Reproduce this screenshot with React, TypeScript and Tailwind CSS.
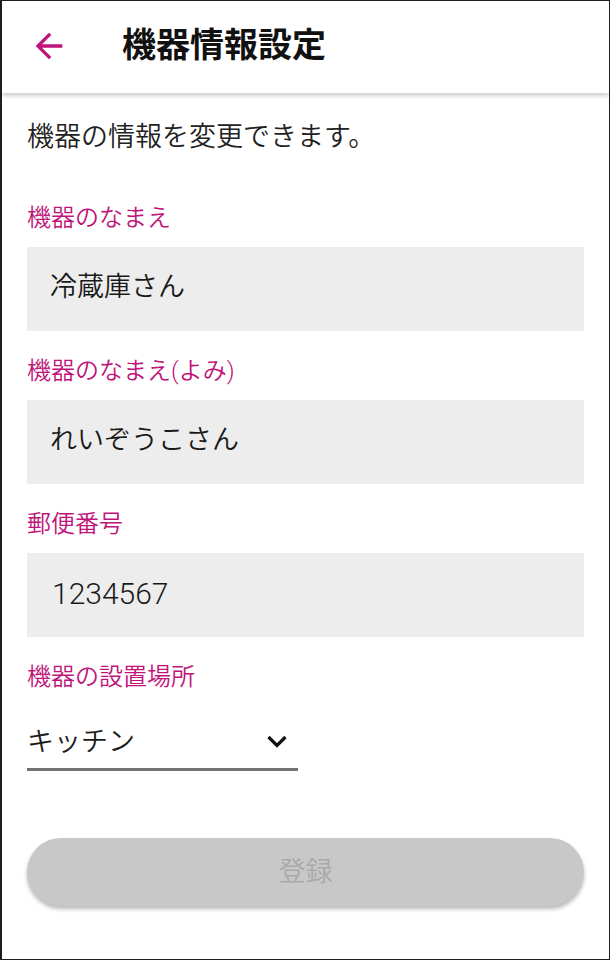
import { useState } from 'react';

const fields = [
  { label: "機器のなまえ", value: "冷蔵庫さん" },
  { label: "機器のなまえ(よみ)", value: "れいぞうこさん" },
  { label: "郵便番号", value: "1234567" },
];

export default function App() {
  const [place] = useState("キッチン");

  return (
    <div className="w-[610px] h-[960px] bg-white border border-l-2 border-[#1e1e1e] flex flex-col overflow-hidden font-['Roboto','Noto_Sans_CJK_JP',sans-serif] font-[350]">
      {/* Header */}
      <header className="h-[92px] shrink-0 flex items-center bg-white shadow-[0_3px_4px_rgba(0,0,0,0.18)] relative z-10">
        <button className="ml-[27px] mb-[3px] w-[40px] h-[40px] flex items-center justify-center text-[#bf1479]">
          <svg width="40" height="40" viewBox="0 0 24 24" fill="currentColor">
            <path d="M20 11H7.83l5.59-5.59L12 4l-8 8 8 8 1.41-1.41L7.83 13H20v-2z" />
          </svg>
        </button>
        <h1 className="ml-[53px] mb-[5px] text-[34px] font-bold text-[#111] leading-[34px]">機器情報設定</h1>
      </header>

      {/* Form */}
      <div className="px-[25px] pt-[24px]">
        <p className="text-[27px] leading-[40px] text-[#222]">機器の情報を変更できます。</p>

        <div className="mt-[44px] flex flex-col gap-[23px]">
          {fields.map((f, i) => (
            <div key={i} className="flex flex-col gap-[12px]">
              <label className="text-[24px] leading-[34px] text-[#bf1479]">{f.label}</label>
              <div className="h-[84px] bg-[#ededed] flex items-center px-[23px] pb-[4px] text-[27px] text-[#1a1a1a]">
                {i === 2 ? <span className="text-[30px] pl-[2px]">{f.value}</span> : f.value}
              </div>
            </div>
          ))}

          <div className="flex flex-col">
            <label className="text-[24px] leading-[34px] text-[#bf1479]">機器の設置場所</label>
            <div className="mt-[12px] w-[271px] h-[65px] flex items-center justify-between border-b-[3px] border-[#737373] pb-[2px]">
              <span className="text-[27px] text-[#1a1a1a] pt-[12px]">{place}</span>
              <svg className="mr-[10px] mt-[10px]" width="22" height="14" viewBox="0 0 22 14" fill="none" stroke="#111" strokeWidth="3.2">
                <path d="M2.5 3l8.5 8.5L19.5 3" />
              </svg>
            </div>
          </div>
        </div>

        <button className="mt-[67px] w-full h-[68px] rounded-full bg-[#c8c8c8] text-[#a9a9a9] text-[27px] shadow-[0_3px_4px_rgba(0,0,0,0.28)]">
          登録
        </button>
      </div>
    </div>
  );
}
